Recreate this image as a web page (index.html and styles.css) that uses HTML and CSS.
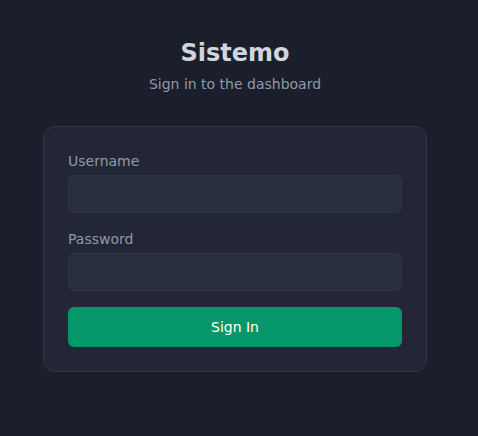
FILE: index.html
```html
<!DOCTYPE html>
<html>
<head>
<meta charset="utf-8">
<link rel="stylesheet" href="styles.css">
</head>
<body>
<main class="wrap">
  <h1 class="title">Sistemo</h1>
  <p class="subtitle">Sign in to the dashboard</p>
  <form class="card">
    <label class="field">
      <span class="label">Username</span>
      <input class="input" type="text">
    </label>
    <label class="field">
      <span class="label">Password</span>
      <input class="input" type="password">
    </label>
    <button class="btn" type="button">Sign In</button>
  </form>
</main>
</body>
</html>
```
FILE: styles.css
```css
* { box-sizing: border-box; }
html, body { margin: 0; height: 100%; }
body {
  background: #1b1f2c;
  font-family: "DejaVu Sans", sans-serif;
  padding: 37px 8px 0 0;
}
.wrap {
  width: 384px;
  margin: 0 auto;
  display: flex;
  flex-direction: column;
  align-items: stretch;
}
.title {
  margin: 0;
  text-align: center;
  font-size: 24px;
  line-height: 32px;
  font-weight: 700;
  color: #d1d5de;
}
.subtitle {
  margin: 5px 0 0;
  text-align: center;
  font-size: 14px;
  line-height: 20px;
  color: #9199a8;
}
.card {
  margin-top: 32px;
  background: #222636;
  border: 1px solid #31364a;
  border-radius: 12px;
  padding: 24px;
  display: flex;
  flex-direction: column;
  gap: 16px;
}
.field {
  display: flex;
  flex-direction: column;
  gap: 4px;
}
.label {
  font-size: 14px;
  line-height: 20px;
  color: #9199a8;
}
.input {
  height: 38px;
  background: #2a2f3f;
  border: 1px solid #2f3445;
  border-radius: 6px;
  outline: none;
  color: #d1d5de;
  padding: 0 12px;
  font: inherit;
}
.btn {
  height: 40px;
  background: #059669;
  border: none;
  border-radius: 6px;
  color: #ffffff;
  font-family: "DejaVu Sans", sans-serif;
  font-size: 14px;
  cursor: pointer;
}
```
